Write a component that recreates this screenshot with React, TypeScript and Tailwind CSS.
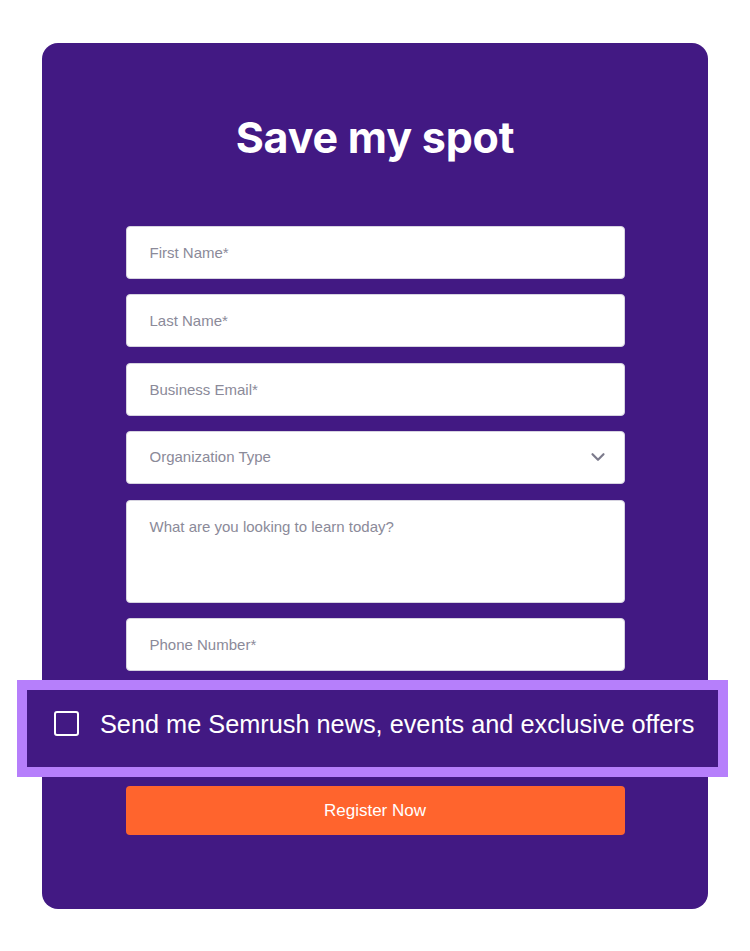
import { ChevronDown } from 'lucide-react';

const fieldClass =
	'block w-full h-[53px] rounded-[4px] border border-[#d6d3e0] bg-white px-[23px] text-[15px] text-[#2b2b3a] placeholder:text-[#8b8a99] outline-none';

export default function App() {
	return (
		<div className="min-h-[951px] bg-white pt-[43px] font-['Liberation_Sans',Arial,sans-serif]">
			<div className="ml-[42px] w-[666px] rounded-[16px] bg-[#421983] pb-[74px]">
				<h1 className="pt-[70px] text-center font-['Inter',sans-serif] text-[43px] font-bold leading-[48px] tracking-[-0.2px] text-white">
					Save my spot
				</h1>

				<form className="mx-auto mt-[65px] w-[499px]">
					<input type="text" placeholder="First Name*" className={fieldClass} />
					<input type="text" placeholder="Last Name*" className={`${fieldClass} mt-[15px]`} />
					<input type="email" placeholder="Business Email*" className={`${fieldClass} mt-[16px]`} />
					<div className="relative mt-[15px]">
						<select
							defaultValue=""
							className={`${fieldClass} appearance-none text-[#8b8a99]`}
						>
							<option value="" disabled>
								Organization Type
							</option>
						</select>
						<ChevronDown
							size={22}
							strokeWidth={2.4}
							className="pointer-events-none absolute right-[16px] top-[15px] text-[#7c7b8c]"
						/>
					</div>
					<textarea
						placeholder="What are you looking to learn today?"
						className="mt-[16px] block h-[103px] w-full resize-none rounded-[4px] border border-[#d6d3e0] bg-white px-[23px] pt-[17px] text-[15px] leading-[18px] text-[#2b2b3a] placeholder:text-[#8b8a99] outline-none"
					/>
					<input type="tel" placeholder="Phone Number*" className={`${fieldClass} mt-[15px]`} />
				</form>

				<label className="ml-[-25px] mt-[9px] flex h-[97px] w-[711px] items-center border-[10px] border-[#b67ffb] bg-[#421983] pl-[27px] pb-[10px]">
					<span className="h-[25px] w-[25px] shrink-0 rounded-[3px] border-2 border-white" />
					<span className="ml-[21px] whitespace-nowrap text-[25.3px] leading-[28px] text-white">
						Send me Semrush news, events and exclusive offers
					</span>
				</label>

				<button
					type="button"
					className="mx-auto mt-[9px] block h-[49px] w-[499px] rounded-[4px] bg-[#ff642d] text-[17px] text-white"
				>
					Register Now
				</button>
			</div>
		</div>
	);
}
